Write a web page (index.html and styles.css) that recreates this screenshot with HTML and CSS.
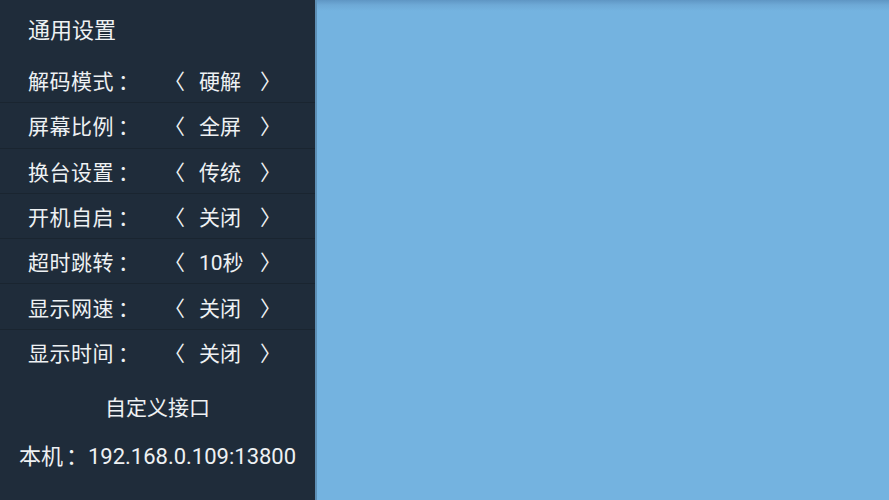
FILE: index.html
```html
<!DOCTYPE html>
<html lang="zh">
<head>
<meta charset="utf-8">
<link rel="stylesheet" href="styles.css">
</head>
<body>
<div class="screen">
  <div class="panel">
    <div class="title">通用设置</div>
    <div class="rows">
      <div class="row"><span class="label">解码模式<span class="colon">：</span></span><span class="br">〈</span><span class="val">硬解</span><span class="br">〉</span></div>
      <div class="row"><span class="label">屏幕比例<span class="colon">：</span></span><span class="br">〈</span><span class="val">全屏</span><span class="br">〉</span></div>
      <div class="row"><span class="label">换台设置<span class="colon">：</span></span><span class="br">〈</span><span class="val">传统</span><span class="br">〉</span></div>
      <div class="row"><span class="label">开机自启<span class="colon">：</span></span><span class="br">〈</span><span class="val">关闭</span><span class="br">〉</span></div>
      <div class="row"><span class="label">超时跳转<span class="colon">：</span></span><span class="br">〈</span><span class="val">10秒</span><span class="br">〉</span></div>
      <div class="row"><span class="label">显示网速<span class="colon">：</span></span><span class="br">〈</span><span class="val">关闭</span><span class="br">〉</span></div>
      <div class="row"><span class="label">显示时间<span class="colon">：</span></span><span class="br">〈</span><span class="val">关闭</span><span class="br">〉</span></div>
    </div>
    <div class="custom">自定义接口</div>
    <div class="ip">本机<span class="colon ipc">：</span>192.168.0.109:13800</div>
  </div>
  <div class="view"></div>
</div>
</body>
</html>
```
FILE: styles.css
```css
html, body {
  margin: 0;
  padding: 0;
  width: 889px;
  height: 500px;
  overflow: hidden;
}
.screen {
  display: flex;
  width: 889px;
  height: 500px;
  font-family: Roboto, "Noto Sans CJK SC", sans-serif;
  color: #eef1f3;
}
.panel {
  width: 315px;
  height: 500px;
  background: #1f2c3a;
  border-right: 2px solid #5d8fb5;
  display: flex;
  flex-direction: column;
  box-sizing: content-box;
}
.title {
  height: 58px;
  line-height: 62px;
  padding-left: 28px;
  font-size: 22px;
}
.rows {
  display: flex;
  flex-direction: column;
}
.row {
  height: 45.3px;
  display: grid;
  grid-template-columns: 136px 35px 61px auto;
  align-items: center;
  padding-left: 28px;
  font-size: 21px;
  border-bottom: 1px solid #1a2530;
  box-sizing: border-box;
}
.row:last-child {
  border-bottom: none;
}
.label {
  letter-spacing: 0.5px;
}
.colon {
  padding-left: 4px;
}
.ipc {
  padding-left: 3px;
}
.br {
  font-size: 21px;
}
.custom {
  margin-top: 19px;
  text-align: center;
  font-size: 21px;
  line-height: 28px;
}
.ip {
  margin-top: 20px;
  text-align: center;
  font-size: 22px;
  line-height: 30px;
}
.view {
  flex: 1;
  height: 500px;
  background: linear-gradient(to bottom, #5f96c4 0px, #6ea9d6 5px, #74b3e0 11px, #74b3e0 100%);
}
```
